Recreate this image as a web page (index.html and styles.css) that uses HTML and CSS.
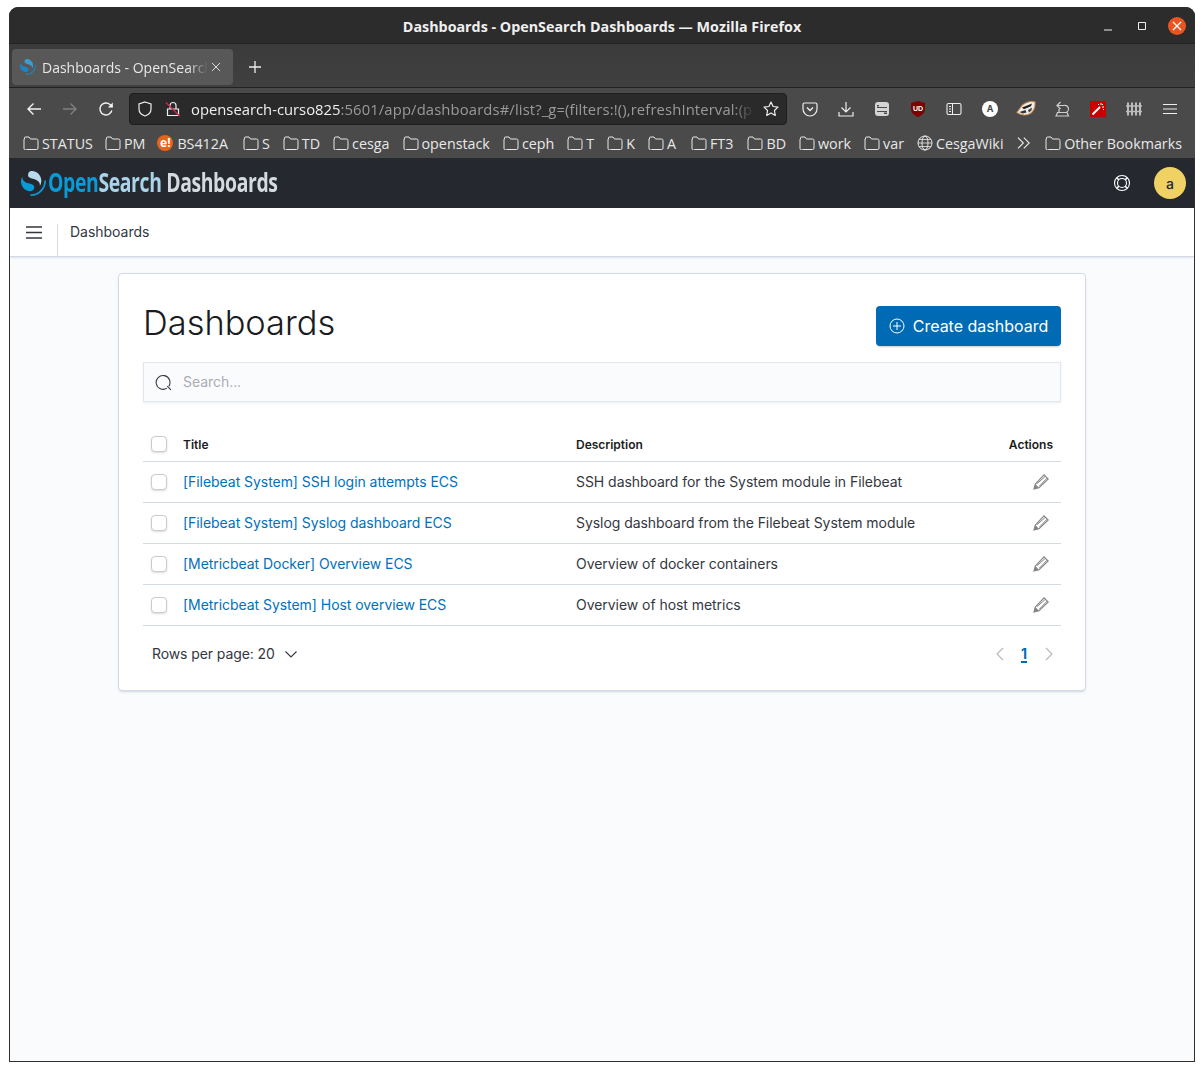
FILE: index.html
```html
<!DOCTYPE html>
<html lang="en">
<head>
  <meta charset="UTF-8" />
  <title>Dashboards - OpenSearch Dashboards</title>
  <link rel="stylesheet" href="styles.css">
</head>
<body>

<svg class="defs" width="0" height="0">
  <symbol id="folder" viewBox="0 0 16 14"><path d="M1.500 3V2a1 1 0 0 1 1-1h3.500l1.500 2h6a1.500 1.500 0 0 1 1.500 1.500V12a1.500 1.500 0 0 1-1.500 1.500h-10A1.500 1.500 0 0 1 1 12V3z" fill="none" stroke="#e8e8e8" stroke-width="1"/></symbol>
  <symbol id="pencil" viewBox="0 0 16 16"><path d="M1 15l1.300-5L11 .8 15.200 5l-9.200 8.700z" fill="none" stroke="#858585" stroke-width="1.100"/><path d="M1 15l1.300-5L6 13.700z" fill="#858585"/><path d="M4.200 9.500L12.500 2.200M6.500 12L14 4.200" stroke="#858585" stroke-width="1"/></symbol>
  <symbol id="os-light" viewBox="0 0 64 64"><path d="M48.081 38c2.176-3.550 4.281-8.282 3.867-14.908C51.090 9.367 38.659-1.045 26.921.084 22.325.525 17.607 4.271 18.026 10.981c.182 2.915 1.609 4.636 3.928 5.959 2.208 1.259 5.044 2.057 8.259 2.961 3.883 1.092 8.388 2.319 11.850 4.871 4.150 3.058 6.986 6.602 6.018 13.228z"/></symbol>
  <symbol id="os-dark" viewBox="0 0 64 64"><path d="M61.737 23.500c-1.249 0-2.262 1.013-2.262 2.263 0 18.619-15.094 33.712-33.712 33.712-1.250 0-2.263 1.013-2.263 2.263S24.513 64 25.763 64C46.880 64 64 46.880 64 25.763c0-1.250-1.013-2.263-2.263-2.263z"/><path d="M3.919 14C1.743 17.550-.362 22.282.052 28.908.910 42.633 13.341 53.045 25.079 51.916c4.596-.441 9.314-4.187 8.895-10.897-.182-2.915-1.609-4.636-3.928-5.959-2.208-1.259-5.044-2.057-8.259-2.961-3.883-1.092-8.388-2.319-11.850-4.871C5.787 24.170 2.951 20.626 3.919 14z"/></symbol>
</svg>

<div class="window">

  <div class="titlebar">
    <span class="win-title">Dashboards - OpenSearch Dashboards — Mozilla Firefox</span>
    <div class="win-btns">
      <svg width="16" height="16" viewBox="0 0 16 16"><path d="M4 12h8" stroke="#eee" stroke-width="1"/></svg>
      <svg width="16" height="16" viewBox="0 0 16 16"><path d="M4.500 4.500h7v7h-7z" fill="none" stroke="#eee" stroke-width="1"/></svg>
      <span class="win-close"><svg width="18" height="18" viewBox="0 0 18 18"><path d="M5 5l8 8M13 5l-8 8" stroke="#fff" stroke-width="1.300"/></svg></span>
    </div>
  </div>

  <div class="tabbar">
    <div class="tab">
      <svg class="tab-logo" width="16" height="16"><use href="#os-dark" fill="#1c86c4"/><use href="#os-light" fill="#3f9ad0"/></svg>
      <span class="tab-title">Dashboards - OpenSearch</span>
      <svg class="tab-x" width="12" height="12" viewBox="0 0 12 12"><path d="M2 2l8 8M10 2l-8 8" stroke="#ddd" stroke-width="1"/></svg>
    </div>
    <svg class="tab-new" width="16" height="16" viewBox="0 0 16 16"><path d="M8 2v12M2 8h12" stroke="#eee" stroke-width="1.300"/></svg>
  </div>

  <div class="toolbar">
    <div class="nav-btns">
      <svg width="16" height="16" viewBox="0 0 16 16"><path d="M15 8H2M7.500 2.500L2 8l5.500 5.500" fill="none" stroke="#f2f2f2" stroke-width="1.400"/></svg>
      <svg width="16" height="16" viewBox="0 0 16 16"><path d="M1 8h13M8.500 2.500L14 8l-5.500 5.500" fill="none" stroke="#808080" stroke-width="1.400"/></svg>
      <svg width="16" height="16" viewBox="0 0 16 16"><path d="M13.800 9.500A6 6 0 1 1 12 3.500L14.500 6" fill="none" stroke="#f2f2f2" stroke-width="1.400"/><path d="M14.800 1.500v5h-5z" fill="#f2f2f2"/></svg>
    </div>
    <div class="urlbar">
      <svg width="16" height="16" viewBox="0 0 16 16"><path d="M8 1l6 2v5c0 3.500-3 6-6 7-3-1-6-3.500-6-7V3z" fill="none" stroke="#eee" stroke-width="1.200"/></svg>
      <svg class="url-lock" width="16" height="16" viewBox="0 0 16 16"><path d="M2.500 8h11v6.500h-11zM5 8V4.500a3 3 0 0 1 6 0V8" fill="none" stroke="#eee" stroke-width="1.200"/><path d="M1 1.500l13.500 13.500" stroke="#d7264c" stroke-width="1.300"/></svg>
      <span class="url-text"><b>opensearch-curso825</b>:5601/app/dashboards#/list?_g=(filters:!(),refreshInterval:(p</span>
      <svg width="16" height="16" viewBox="0 0 16 16"><path d="M8 1l2.100 4.500 4.900.6-3.600 3.400.9 4.900L8 11.900l-4.300 2.500.9-4.900L1 6.100l4.900-.6z" fill="none" stroke="#eee" stroke-width="1.200" stroke-linejoin="round"/></svg>
    </div>
    <div class="ext-icons">
      <svg width="16" height="16" viewBox="0 0 16 16"><path d="M2.500 2h11A1.500 1.500 0 0 1 15 3.500V8A7 7 0 0 1 1 8V3.500A1.500 1.500 0 0 1 2.500 2z" fill="none" stroke="#eee" stroke-width="1.200"/><path d="M5 6.500l3 3 3-3" fill="none" stroke="#eee" stroke-width="1.400"/></svg>
      <svg width="16" height="16" viewBox="0 0 16 16"><path d="M8 1v10M3.500 6.500L8 11l4.500-4.500M1 11v4h14v-4" fill="none" stroke="#eee" stroke-width="1.200"/></svg>
      <svg width="16" height="16" viewBox="0 0 16 16"><rect x="1" y="1" width="14" height="14" rx="3" fill="#d5d5d5"/><path d="M3 6.500h10M3 10.500h10" stroke="#4a4a4a" stroke-width="1"/><rect x="3" y="4" width="2" height="1.500" fill="#4a4a4a"/><rect x="10" y="11.500" width="3" height="1.500" fill="#4a4a4a"/></svg>
      <svg width="16" height="16" viewBox="0 0 16 16"><path d="M8 0l7 2v6c0 4-3.500 6.500-7 8-3.500-1.500-7-4-7-8V2z" fill="#800000"/><text x="8" y="10" class="ext-ub">UD</text></svg>
      <svg width="16" height="16" viewBox="0 0 16 16"><rect x="1" y="2.500" width="14" height="11" rx="1.500" fill="none" stroke="#eee" stroke-width="1.100"/><path d="M6.500 2.500v11M3 5.500h2M3 8h2M3 10.500h2" stroke="#eee" stroke-width="1"/></svg>
      <span class="ext-a">A</span>
      <svg class="ext-badger" width="16" height="16" viewBox="0 0 16 16"><path d="M-1 11.500L4 4.500C7.500 1.500 13 0 17 1c.3 4-1 8.500-4 11-4 3-10 2.500-14-.5z" fill="#f2efe8" stroke="#c98f58" stroke-width="1.100"/><path d="M4 6.500L14 2.500l-1 2.800-7 3z" fill="#222"/><path d="M1.500 11L7.500 9l1 2.500-4 1z" fill="#333"/><path d="M10 9l4-2.500-.5 3-2.500 2z" fill="#444"/></svg>
      <svg width="16" height="16" viewBox="0 0 16 16"><path d="M2 15l1.500-3.500h9.500l1.500 3.500z" fill="none" stroke="#cfcfcf" stroke-width="1.200"/><path d="M6.500 1L3 4.500 6.500 8M3 4.500h6.500a3.300 3.300 0 0 1 2.500 7M5 8v3.500" fill="none" stroke="#cfcfcf" stroke-width="1.200"/></svg>
      <svg width="16" height="16" viewBox="0 0 16 16"><rect width="16" height="16" fill="#c80000"/><path d="M2.500 13.500l7.500-7.500" stroke="#fff" stroke-width="2"/><path d="M11 2v2M14 6h-2M13 3l-1 1M8 3l1 1M14 9l-1-1" stroke="#fff" stroke-width="1"/></svg>
      <svg width="16" height="16" viewBox="0 0 16 16"><path d="M2 1.500v13M6 1.500v13M10 1.500v13M14 1.500v13" stroke="#bdbdbd" stroke-width="2"/><path d="M0 5h16M0 10.500h16" stroke="#bdbdbd" stroke-width="1.500"/></svg>
      <svg width="16" height="16" viewBox="0 0 16 16"><path d="M1 3.500h14M1 8h14M1 12.500h14" stroke="#eee" stroke-width="1.200"/></svg>
    </div>
  </div>

  <div class="bookmarks">
    <span class="bm bm-tight"><svg class="folder"><use href="#folder"/></svg>STATUS</span>
    <span class="bm bm-tight"><svg class="folder"><use href="#folder"/></svg>PM</span>
    <span class="bm bm-wide"><span class="bm-e">e!</span>BS412A</span>
    <span class="bm"><svg class="folder"><use href="#folder"/></svg>S</span>
    <span class="bm"><svg class="folder"><use href="#folder"/></svg>TD</span>
    <span class="bm"><svg class="folder"><use href="#folder"/></svg>cesga</span>
    <span class="bm"><svg class="folder"><use href="#folder"/></svg>openstack</span>
    <span class="bm"><svg class="folder"><use href="#folder"/></svg>ceph</span>
    <span class="bm"><svg class="folder"><use href="#folder"/></svg>T</span>
    <span class="bm"><svg class="folder"><use href="#folder"/></svg>K</span>
    <span class="bm bm-wide"><svg class="folder"><use href="#folder"/></svg>A</span>
    <span class="bm bm-mid"><svg class="folder"><use href="#folder"/></svg>FT3</span>
    <span class="bm"><svg class="folder"><use href="#folder"/></svg>BD</span>
    <span class="bm"><svg class="folder"><use href="#folder"/></svg>work</span>
    <span class="bm"><svg class="folder"><use href="#folder"/></svg>var</span>
    <span class="bm bm-wide"><svg class="globe" viewBox="0 0 16 16"><circle cx="8" cy="8" r="7" fill="none" stroke="#e8e8e8"/><ellipse cx="8" cy="8" rx="3" ry="7" fill="none" stroke="#e8e8e8"/><path d="M1 8h14M2 4.500h12M2 11.500h12" stroke="#e8e8e8" stroke-width=".8"/></svg>CesgaWiki</span>
    <svg class="bm-more" width="14" height="14" viewBox="0 0 14 14"><path d="M1 1.500L6.500 7 1 12.500M7 1.500L12.500 7 7 12.500" fill="none" stroke="#e8e8e8" stroke-width="1.200"/></svg>
    <span class="bm bm-other"><svg class="folder"><use href="#folder"/></svg>Other Bookmarks</span>
  </div>

  <div class="page">
    <header class="os-header">
      <div class="os-logo">
        <svg width="25" height="25"><use href="#os-dark" fill="#0a9ad6"/><use href="#os-light" fill="#b9d9ec"/></svg>
        <span class="os-wordmark"><span class="wm-open">Open</span><span class="wm-search">Search</span> <span class="wm-dash">Dashboards</span></span>
      </div>
      <div class="os-right">
        <svg width="18" height="18" viewBox="0 0 18 18"><circle cx="9" cy="9" r="7.500" fill="none" stroke="#fff" stroke-width="1.100"/><circle cx="9" cy="9" r="4.500" fill="none" stroke="#fff" stroke-width="1.100"/><path d="M3.700 3.700l2.200 2.200M14.300 3.700l-2.200 2.200M3.700 14.300l2.200-2.200M14.300 14.300l-2.200-2.200" stroke="#fff" stroke-width="1.500"/></svg>
        <span class="avatar">a</span>
      </div>
    </header>

    <div class="crumbbar">
      <span class="menu-btn"><svg width="16" height="13" viewBox="0 0 16 13"><path d="M0 1h16M0 6.500h16M0 12h16" stroke="#343741" stroke-width="1.700"/></svg></span>
      <span class="crumb-sep"></span>
      <span class="crumb">Dashboards</span>
    </div>

    <main class="content">
      <section class="panel">
        <div class="panel-head">
          <h1>Dashboards</h1>
          <button class="create-btn">
            <svg width="16" height="16" viewBox="0 0 16 16"><circle cx="8" cy="8" r="7" fill="none" stroke="#fff" stroke-width="1"/><path d="M8 4v8M4 8h8" stroke="#fff" stroke-width="1"/></svg>
            Create dashboard
          </button>
        </div>

        <div class="search">
          <svg width="17" height="17" viewBox="0 0 16 16"><path d="M11.200 13.300A6.500 6.500 0 1 1 13 11.500" fill="none" stroke="#343741" stroke-width="1"/><path d="M11.500 11.500l3.500 3.500" stroke="#343741" stroke-width="1"/></svg>
          <span class="search-hint">Search...</span>
        </div>

        <table class="list">
          <thead>
            <tr>
              <th class="col-check"><span class="check"></span></th>
              <th class="col-title">Title</th>
              <th class="col-desc">Description</th>
              <th class="col-act">Actions</th>
            </tr>
          </thead>
          <tbody>
            <tr>
              <td class="col-check"><span class="check"></span></td>
              <td><a href="#">[Filebeat System] SSH login attempts ECS</a></td>
              <td>SSH dashboard for the System module in Filebeat</td>
              <td class="col-act"><svg class="pencil"><use href="#pencil"/></svg></td>
            </tr>
            <tr>
              <td class="col-check"><span class="check"></span></td>
              <td><a href="#">[Filebeat System] Syslog dashboard ECS</a></td>
              <td>Syslog dashboard from the Filebeat System module</td>
              <td class="col-act"><svg class="pencil"><use href="#pencil"/></svg></td>
            </tr>
            <tr>
              <td class="col-check"><span class="check"></span></td>
              <td><a href="#">[Metricbeat Docker] Overview ECS</a></td>
              <td>Overview of docker containers</td>
              <td class="col-act"><svg class="pencil"><use href="#pencil"/></svg></td>
            </tr>
            <tr>
              <td class="col-check"><span class="check"></span></td>
              <td><a href="#">[Metricbeat System] Host overview ECS</a></td>
              <td>Overview of host metrics</td>
              <td class="col-act"><svg class="pencil"><use href="#pencil"/></svg></td>
            </tr>
          </tbody>
        </table>

        <div class="table-foot">
          <span class="rows">Rows per page: 20
            <svg width="14" height="14" viewBox="0 0 14 14"><path d="M1.500 4.500L7 10l5.500-5.500" fill="none" stroke="#343741" stroke-width="1.100"/></svg>
          </span>
          <div class="pager">
            <svg class="pager-prev" width="10" height="14" viewBox="0 0 10 14"><path d="M8 1L2 7l6 6" fill="none" stroke="#b4b7bd" stroke-width="1.100"/></svg>
            <span class="page-num">1</span>
            <svg width="10" height="14" viewBox="0 0 10 14"><path d="M2 1l6 6-6 6" fill="none" stroke="#b4b7bd" stroke-width="1.100"/></svg>
          </div>
        </div>
      </section>
    </main>
  </div>

</div>

</body>
</html>
```

FILE: styles.css
```css
html, body {
  margin: 0;
  height: 100%;
  background: #fff;
}

body {
  padding: 7px 9px 9px 9px;
  box-sizing: border-box;
  height: 1071px;
  overflow: hidden;
  font-family: Inter, "Liberation Sans", sans-serif;
}

.defs {
  position: absolute;
}

.window {
  height: 1055px;
  display: flex;
  flex-direction: column;
  border-radius: 9px 9px 0 0;
  overflow: hidden;
  background: #2c2c2c;
}

.titlebar {
  height: 37px;
  flex: none;
  display: flex;
  align-items: center;
  justify-content: center;
  position: relative;
  padding-top: 2px;
  box-sizing: border-box;
  background: #2c2c2c;
  border-bottom: 1px solid #232323;
}

.win-title {
  font-family: "Open Sans", sans-serif;
  font-weight: 700;
  font-size: 14.300px;
  color: #f0f0f0;
}

.win-btns {
  position: absolute;
  right: 9px;
  top: 10px;
  display: flex;
  align-items: center;
  gap: 18px;
}

.win-close {
  width: 18px;
  height: 18px;
  border-radius: 50%;
  background: #e95420;
  display: flex;
}

.tabbar {
  height: 44px;
  flex: none;
  box-sizing: border-box;
  display: flex;
  align-items: center;
  padding: 2px 0 0 3px;
  background: linear-gradient(#3b3b3b, #404040);
  border-bottom: 1px solid #232323;
}

.tab {
  width: 221px;
  height: 36px;
  box-sizing: border-box;
  display: flex;
  align-items: center;
  padding: 0 11px 0 8px;
  background: #585858;
  border-radius: 4px;
  color: #e8e8e8;
  font-family: "Open Sans", sans-serif;
  font-size: 14px;
}

.tab-logo {
  flex: none;
  margin-right: 6px;
}

.tab-title {
  flex: 1;
  padding-top: 1px;
  white-space: nowrap;
  overflow: hidden;
  -webkit-mask-image: linear-gradient(to right, #000 88%, transparent);
  mask-image: linear-gradient(to right, #000 88%, transparent);
}

.tab-x {
  flex: none;
  margin-left: 2px;
}

.tab-new {
  margin: 1px 0 0 14px;
}

.toolbar {
  height: 41px;
  flex: none;
  display: flex;
  align-items: center;
  background: #4a4a4a;
  padding: 0 17px 0 17px;
}

.nav-btns {
  display: flex;
  gap: 20px;
  margin-right: 15px;
}

.urlbar {
  width: 658px;
  height: 32px;
  box-sizing: border-box;
  flex: none;
  display: flex;
  align-items: center;
  padding: 0 7px;
  background: #2a2a2a;
  border: 1px solid #1e1e1e;
  border-radius: 4px;
  font-family: "Open Sans", sans-serif;
  font-size: 14.800px;
  color: #9a9a9a;
}

.url-lock {
  margin-left: 12px;
  margin-right: 10px;
  flex: none;
}

.url-text {
  flex: 1;
  overflow: hidden;
  white-space: nowrap;
  margin-right: 8px;
  letter-spacing: .13px;
  -webkit-mask-image: linear-gradient(to right, #000 96%, transparent);
  mask-image: linear-gradient(to right, #000 96%, transparent);
}

.url-text b {
  font-weight: 400;
  letter-spacing: 0;
  color: #f0f0f0;
}

.ext-icons {
  display: flex;
  align-items: center;
  gap: 20px;
  margin-left: 15px;
}

.ext-badger {
  overflow: visible;
}

.ext-ub {
  font-family: "Liberation Sans", sans-serif;
  font-size: 7px;
  font-weight: 700;
  fill: #fff;
  text-anchor: middle;
}

.ext-a {
  width: 16px;
  height: 16px;
  border-radius: 50%;
  background: #fff;
  color: #444;
  font-size: 9px;
  font-weight: 700;
  display: flex;
  align-items: center;
  justify-content: center;
}

.bookmarks {
  height: 29px;
  flex: none;
  display: flex;
  align-items: center;
  padding: 0 13px 1px 14px;
  box-sizing: border-box;
  background: #4a4a4a;
  font-family: "Open Sans", sans-serif;
  font-size: 14.300px;
  color: #e8e8e8;
  white-space: nowrap;
}

.bm {
  display: flex;
  align-items: center;
  margin-right: 13px;
}

.bm-tight {
  margin-right: 12px;
}

.bm-mid {
  margin-right: 14px;
}

.bm-wide {
  margin-right: 15px;
}

.bm-other {
  margin-right: 0;
}

.bm-more {
  margin: 0 14px 0 -1px;
}

.folder {
  width: 16px;
  height: 14px;
  margin-right: 3px;
}

.globe {
  width: 16px;
  height: 16px;
  margin-right: 3px;
}

.bm-e {
  width: 16px;
  height: 16px;
  margin-right: 4px;
  border-radius: 50%;
  background: #e4661b;
  color: #fff;
  font-size: 12px;
  font-weight: 700;
  line-height: 15px;
  text-align: center;
}

.page {
  flex: 1;
  display: flex;
  flex-direction: column;
  background: #fafbfd;
  border: 1px solid #2f2f2f;
  border-top: 0;
  min-height: 0;
}

.os-header {
  height: 50px;
  flex: none;
  display: flex;
  align-items: center;
  justify-content: space-between;
  padding: 0 8px 0 11px;
  background: #25282f;
}

.os-logo {
  display: flex;
  align-items: center;
  gap: 2px;
}

.os-wordmark {
  display: inline-block;
  margin-top: -4px;
  font-family: "Open Sans", sans-serif;
  font-weight: 700;
  font-size: 27px;
  letter-spacing: -.5px;
  white-space: nowrap;
  transform: scaleX(.717);
  transform-origin: left center;
  width: 230px;
}

.wm-open { color: #0a9ad6; }
.wm-search { color: #a9d4ea; }
.wm-dash { color: #d3dae0; }

.os-right {
  display: flex;
  align-items: center;
  gap: 23px;
}

.avatar {
  width: 32px;
  height: 32px;
  border-radius: 50%;
  background: #f0d264;
  color: #25282f;
  font-size: 14px;
  font-weight: 500;
  display: flex;
  align-items: center;
  justify-content: center;
}

.crumbbar {
  height: 48px;
  flex: none;
  display: flex;
  align-items: stretch;
  background: #fff;
  border-bottom: 1px solid #d3dae6;
  box-shadow: 0 2px 2px -1px rgba(152, 162, 179, .3);
}

.menu-btn {
  width: 47px;
  padding-left: 1px;
  box-sizing: border-box;
  display: flex;
  align-items: center;
  justify-content: center;
}

.crumb-sep {
  width: 1px;
  margin-top: 16px;
  background: #d3dae6;
}

.crumb {
  display: flex;
  align-items: center;
  margin-left: 12px;
  padding-bottom: 1px;
  font-size: 14px;
  letter-spacing: -.03px;
  color: #343741;
}

.content {
  flex: 1;
  padding: 16px 108px;
}

.panel {
  box-sizing: border-box;
  height: 418px;
  padding: 24px 24px 0 24px;
  background: #fff;
  border: 1px solid #d3dae6;
  border-radius: 4px;
  box-shadow: 0 2px 2px -1px rgba(152, 162, 179, .3), 0 1px 5px -2px rgba(152, 162, 179, .3);
}

.panel-head {
  display: flex;
  justify-content: space-between;
  align-items: flex-start;
  height: 64px;
}

h1 {
  margin: 1px 0 0 0;
  font-size: 34.400px;
  font-weight: 300;
  line-height: 48px;
  color: #1a1c21;
}

.create-btn {
  width: 185px;
  height: 40px;
  margin-top: 8px;
  display: flex;
  align-items: center;
  justify-content: center;
  gap: 8px;
  background: #006bb4;
  border: 0;
  border-radius: 4px;
  color: #fff;
  font-family: Inter, sans-serif;
  font-size: 16px;
  box-shadow: 0 2px 2px -1px rgba(54, 97, 126, .3);
}

.search {
  box-sizing: border-box;
  height: 40px;
  display: flex;
  align-items: center;
  gap: 11px;
  padding-left: 11px;
  background: #fafbfd;
  border: 1px solid #e3e6ef;
  box-shadow: 0 1px 2px rgba(152, 162, 179, .2);
  font-size: 14px;
  letter-spacing: -.05px;
  color: #a9adb5;
}

.search-hint {
  padding-bottom: 2px;
}

.list {
  width: 100%;
  margin-top: 20px;
  border-collapse: collapse;
  table-layout: fixed;
  font-size: 14px;
  letter-spacing: -.05px;
  color: #343741;
}

.list th {
  box-sizing: border-box;
  height: 39px;
  padding: 6px 0 0 0;
  font-size: 12px;
  letter-spacing: 0;
  font-weight: 600;
  text-align: left;
  color: #1a1c21;
  border-bottom: 1px solid #d3dae6;
}

.list td {
  box-sizing: border-box;
  height: 41px;
  padding: 0;
  border-bottom: 1px solid #d3dae6;
}

.list a {
  color: #0071bc;
  text-decoration: none;
}

.col-check {
  width: 40px;
}

.col-title {
  width: 393px;
}

.col-act {
  width: 90px;
}

.list th.col-act {
  text-align: right;
  padding-right: 8px;
}

.list td.col-act {
  text-align: right;
  padding: 0 12px 2px 0;
}

.check {
  display: block;
  width: 16px;
  height: 16px;
  margin-left: 8px;
  box-sizing: border-box;
  background: #fff;
  border: 1px solid #c9ccd2;
  border-radius: 4px;
  box-shadow: 0 1px 2px rgba(0, 0, 0, .15);
}

.pencil {
  width: 16px;
  height: 16px;
  vertical-align: middle;
}

.table-foot {
  display: flex;
  align-items: center;
  justify-content: space-between;
  height: 56px;
  padding: 0 7px 0 9px;
  font-size: 14px;
  color: #343741;
}

.rows {
  display: flex;
  align-items: center;
  gap: 9px;
  letter-spacing: -.1px;
}

.pager {
  display: flex;
  align-items: center;
  gap: 17px;
}

.pager-prev {
  margin-right: -1px;
}

.page-num {
  font-weight: 700;
  color: #006bb4;
  text-decoration: underline;
  text-underline-offset: 2px;
  text-decoration-thickness: 2px;
}
```
